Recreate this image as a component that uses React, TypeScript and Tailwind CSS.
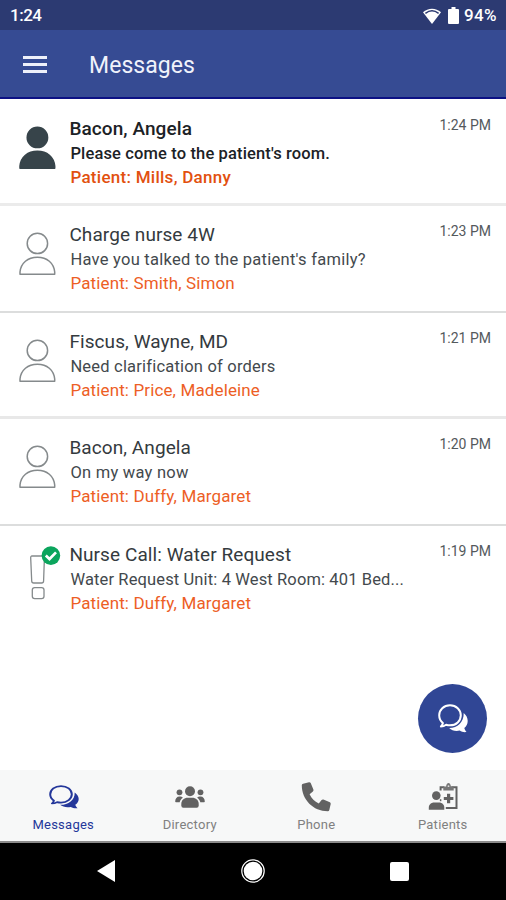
import React from "react";
import clsx from "clsx";

type Message = {
  title: string;
  body: string;
  patient: string;
  time: string;
  unread?: boolean;
  alert?: boolean;
  bodySpacing: string;
  divider?: string;
};

const messages: Message[] = [
  {
    title: "Bacon, Angela",
    body: "Please come to the patient's room.",
    patient: "Patient: Mills, Danny",
    time: "1:24 PM",
    unread: true,
    bodySpacing: "tracking-[0.14px]",
    divider: "border-b-3 border-[#ebebeb]",
  },
  {
    title: "Charge nurse 4W",
    body: "Have you talked to the patient's family?",
    patient: "Patient: Smith, Simon",
    time: "1:23 PM",
    bodySpacing: "tracking-[0.26px]",
    divider: "border-b-2 border-[#dcdddd]",
  },
  {
    title: "Fiscus, Wayne, MD",
    body: "Need clarification of orders",
    patient: "Patient: Price, Madeleine",
    time: "1:21 PM",
    bodySpacing: "tracking-[0.2px]",
    divider: "border-b-3 border-[#e8e8e8]",
  },
  {
    title: "Bacon, Angela",
    body: "On my way now",
    patient: "Patient: Duffy, Margaret",
    time: "1:20 PM",
    bodySpacing: "tracking-[0.25px]",
    divider: "border-b-2 border-[#dcdddd]",
  },
  {
    title: "Nurse Call: Water Request",
    body: "Water Request Unit: 4 West Room: 401 Bed...",
    patient: "Patient: Duffy, Margaret",
    time: "1:19 PM",
    alert: true,
    bodySpacing: "tracking-[0.13px]",
  },
];

const PersonIcon = ({ filled }: { filled?: boolean }) => (
  <svg
    width="38"
    height="46"
    viewBox="0 0 38 46"
    fill={filled ? "#37444a" : "none"}
    stroke={filled ? "#37444a" : "#858a8c"}
    strokeWidth="1.5"
    strokeLinejoin="round"
  >
    <circle cx="19.4" cy="12.4" r="10.2" />
    <path d="M2 43.300v-2.300C2.900 32 9.800 26.300 19.400 26.300s16.400 5.700 17.300 14.700v2.300z" />
  </svg>
);

const AlertIcon = () => (
  <svg width="44" height="56" viewBox="0 0 44 56" fill="none">
    <path
      d="M14 11h10.800q1.700 0 1.600 2l-.8 23q-.1 2-2 2h-7.900q-1.900 0-2-2l-1-23q-.1-2 1.300-2z"
      stroke="#858a8c"
      strokeWidth="1.3"
    />
    <rect x="14.300" y="42.700" width="11.700" height="11" rx="2.400" stroke="#858a8c" strokeWidth="1.300" />
    <circle cx="32.900" cy="10.600" r="9.300" fill="#0ba55d" />
    <path d="m27.800 10.500 3.700 3.500 6.500-6.600" stroke="#fff" strokeWidth="2.700" />
  </svg>
);

const ChatIcon = ({ className }: { className?: string }) => (
  <svg className={className} viewBox="0 0 30 29" preserveAspectRatio="none" fill="none">
    <path
      d="M4.900 19C2.600 17.200 1.200 14.300 1.200 11.300 1.200 5.700 5.800 1.300 12 1.300s10.800 4.400 10.800 10-4.600 10-10.800 10c-1.400 0-2.700-.2-3.900-.6-1.500 1.100-3.200 1.700-5.200 1.700 1.100-.9 1.800-2 2-3.400z"
      stroke="currentColor"
      strokeWidth="2"
      strokeLinejoin="round"
    />
    <path
      d="M25.700 9c2.500 2.100 4 4.900 4 7.900 0 3-1.400 5.400-3.400 7.100.4 1.500 1 2.700 2.200 4-2.400.5-4.700-.2-6.800-1.500-3.800 1-7.900.1-10.600-2.500 8 .2 14.900-5.600 14.600-15z"
      fill="currentColor"
    />
  </svg>
);

const DirectoryIcon = () => (
  <svg width="30" height="22" viewBox="0 0 30 22" fill="#626262">
    <circle cx="15" cy="5.200" r="5" />
    <circle cx="4.500" cy="6.300" r="2.900" />
    <circle cx="25.500" cy="6.300" r="2.900" />
    <path d="M6.300 19.500v-1.500c0-3.700 2.800-6.200 6.500-6.200h4.400c3.700 0 6.500 2.500 6.500 6.200v1.500q0 2.300-2 2.300H8.300q-2 0-2-2.300z" />
    <path d="M.2 15.500c0-2.800 1.700-4.900 4.300-4.900 1.500 0 2.500.3 3.300 1.100C5.900 13.100 5 14.600 4.700 16.300H1q-.8 0-.8-.8zM29.800 15.500c0-2.800-1.700-4.900-4.300-4.900-1.500 0-2.500.3-3.300 1.100 1.900 1.400 2.800 2.900 3.100 4.600H29q.8 0 .8-.8z" />
  </svg>
);

const PhoneIcon = () => (
  <svg width="30" height="30" viewBox="0 0 30 30" fill="#626262">
    <path d="M2.100 1.700 8 .2q1.200-.2 1.700.9l2.700 6.500q.4 1-.5 1.800L8.600 12.200c2 4.200 5 7.200 9.200 9.200l2.800-3.400q.8-.9 1.800-.5l6.500 2.800q1 .5.800 1.700l-1.400 6q-.3 1.200-1.500 1.200C12.300 29.200.8 17.700.8 3.200q0-1.200 1.300-1.500z" />
  </svg>
);

const PatientsIcon = () => (
  <svg width="30" height="28" viewBox="0 0 30 28" fill="none">
    <path d="M12.600 7.500V4.200h3.700M23.300 4.200h5.200v20.700H17.800" stroke="#626262" strokeWidth="2" />
    <path d="M12.600 16.200v2" stroke="#626262" strokeWidth="1.500" />
    <path d="M15.300 7.400V3.600h2.800C18.300 1.300 19.300 0 20.500 0s2.200 1.300 2.400 3.600h2.800v3.800z" fill="#777" />
    <circle cx="20.500" cy="3.200" r=".9" fill="#ddd" />
    <path d="M19 10.800h3.200V14h3.200v3.100h-3.200v3.200H19v-3.200h-3.200V14H19z" fill="#626262" />
    <circle cx="8.300" cy="12.600" r="4.300" fill="#626262" />
    <path d="M.8 26.700v-2.200c0-3 2.300-5.100 5.300-5.100h5c3 0 5.200 2.100 5.200 5.100v2.200z" fill="#626262" />
  </svg>
);

const StatusBar = () => (
  <div className="flex h-[30px] items-center justify-between bg-[#2c3a72] pl-[10px] pr-[9px] pt-px text-white">
    <span className="text-[17px] font-medium tracking-[-0.5px]">1:24</span>
    <div className="flex items-center">
      <svg width="18" height="16" viewBox="0 0 18 16" fill="#fff">
        <path d="M0 4.300C5-.6 13-.6 18 4.300L9 16z" />
        <path d="M2.400 5.300c4-3 9.200-3 13.200 0" stroke="#2c3a72" strokeWidth="1.500" fill="none" />
      </svg>
      <svg className="ml-[7px]" width="11" height="17" viewBox="0 0 11 17" fill="#fff">
        <path d="M3.500 0h4v2H10q1 0 1 1v13q0 1-1 1H1q-1 0-1-1V3q0-1 1-1h2.500z" />
      </svg>
      <span className="ml-[5px] text-[17px] font-medium tracking-[0.4px]">94%</span>
    </div>
  </div>
);

const Header = () => (
  <div className="flex h-[69px] items-center border-b-2 border-[#0c1184] bg-[#364b93] pl-[23px]">
    <div className="flex w-[24px] flex-col gap-[4px] pt-px">
      <div className="h-[3px] bg-[#eef0fa]" />
      <div className="h-[3px] bg-[#eef0fa]" />
      <div className="h-[3px] bg-[#eef0fa]" />
    </div>
    <h1 className="ml-[42px] pt-[6px] text-[23px] tracking-[0.05px] text-[#f0f2fb]">Messages</h1>
  </div>
);

const MessageRow = ({ message }: { message: Message }) => (
  <li className={clsx("flex h-[106.4px] pr-[15px] pt-[17px]", message.divider)}>
    <div className="w-[69.4px] shrink-0">
      {message.alert ? (
        <div className="mt-[2.500px] pl-[18px]">
          <AlertIcon />
        </div>
      ) : (
        <div className="pl-[18px] pt-[8px]">
          <PersonIcon filled={message.unread} />
        </div>
      )}
    </div>
    <div className="min-w-0 flex-1 whitespace-nowrap">
      <div
        className={clsx(
          "text-[19px] leading-[24px] tracking-[0.08px]",
          message.unread ? "font-medium text-[#1c2226]" : "text-[#343a3e]"
        )}
      >
        {message.title}
      </div>
      <div
        className={clsx(
          "pl-px text-[16.5px] leading-[25px]",
          message.bodySpacing,
          message.unread ? "font-medium text-[#1c2226]" : "text-[#43494d]"
        )}
      >
        {message.body}
      </div>
      <div
        className={clsx(
          "pl-px text-[17px] leading-[23px]",
          message.unread
            ? "font-medium tracking-[0.27px] text-[#e2500f]"
            : "tracking-[0.13px] text-[#ed5e25]"
        )}
      >
        {message.patient}
      </div>
    </div>
    <div className="shrink-0 text-[14px] leading-[16px] text-[#54595c]">{message.time}</div>
  </li>
);

const tabs = [
  { label: "Messages", icon: <ChatIcon className="ml-px h-[24px] w-[30px]" />, active: true },
  { label: "Directory", icon: <DirectoryIcon /> },
  { label: "Phone", icon: <PhoneIcon /> },
  { label: "Patients", icon: <PatientsIcon /> },
];

const TabBar = () => (
  <nav className="grid h-[73px] grid-cols-4 border-b-2 border-[#8c8c8c] bg-[#f7f8f8]">
    {tabs.map((tab) => (
      <div
        key={tab.label}
        className={clsx("flex flex-col items-center pt-[11px]", tab.active ? "text-[#24379a]" : "text-[#808080]")}
      >
        <div className="flex h-[32px] items-center justify-center">{tab.icon}</div>
        <span className="text-[13px] leading-[24px] tracking-[0.25px]">{tab.label}</span>
      </div>
    ))}
  </nav>
);

const SystemNav = () => (
  <div className="flex h-[57px] items-center justify-between bg-black px-[97px] pb-px">
    <svg width="18" height="22" viewBox="0 0 18 22" fill="#fff">
      <path d="M18 0v22L0 11z" />
    </svg>
    <svg width="24" height="24" viewBox="0 0 24 24">
      <circle cx="12" cy="12" r="11.200" fill="none" stroke="#fff" strokeWidth="1.200" />
      <circle cx="12" cy="12" r="9.300" fill="#fff" />
    </svg>
    <div className="h-[19px] w-[19px] rounded-[2px] bg-white" />
  </div>
);

const App = () => {
  return (
    <div className="relative flex h-[900px] w-[506px] flex-col overflow-hidden bg-white font-[Roboto,sans-serif]">
      <StatusBar />
      <Header />
      <ul className="flex-1 pt-px">
        {messages.map((message) => (
          <MessageRow key={message.time} message={message} />
        ))}
      </ul>
      <button className="absolute bottom-[147px] right-[19px] flex h-[69px] w-[69px] items-center justify-center rounded-full bg-[#304695] text-white">
        <ChatIcon className="h-[29px] w-[30px]" />
      </button>
      <TabBar />
      <SystemNav />
    </div>
  );
};

export default App;
